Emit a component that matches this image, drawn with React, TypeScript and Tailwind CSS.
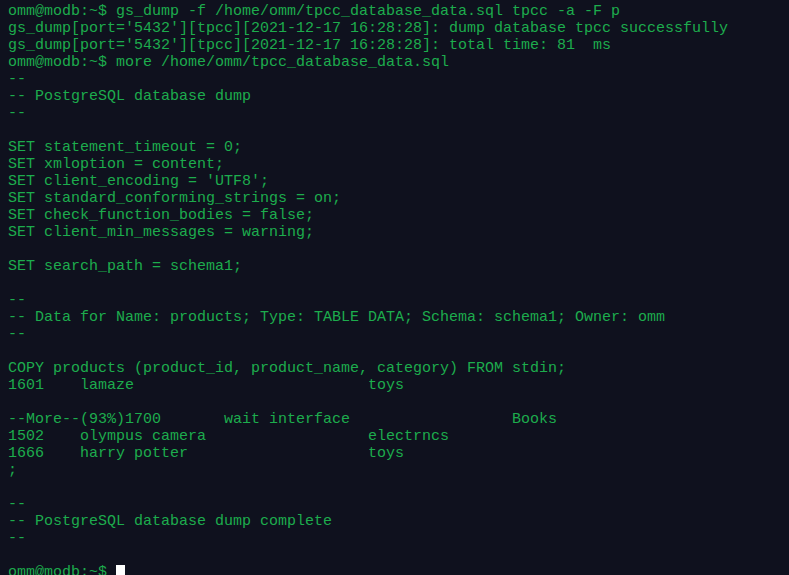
const lines = [
  "omm@modb:~$ gs_dump -f /home/omm/tpcc_database_data.sql tpcc -a -F p",
  "gs_dump[port='5432'][tpcc][2021-12-17 16:28:28]: dump database tpcc successfully",
  "gs_dump[port='5432'][tpcc][2021-12-17 16:28:28]: total time: 81  ms",
  "omm@modb:~$ more /home/omm/tpcc_database_data.sql",
  "--",
  "-- PostgreSQL database dump",
  "--",
  "",
  "SET statement_timeout = 0;",
  "SET xmloption = content;",
  "SET client_encoding = 'UTF8';",
  "SET standard_conforming_strings = on;",
  "SET check_function_bodies = false;",
  "SET client_min_messages = warning;",
  "",
  "SET search_path = schema1;",
  "",
  "--",
  "-- Data for Name: products; Type: TABLE DATA; Schema: schema1; Owner: omm",
  "--",
  "",
  "COPY products (product_id, product_name, category) FROM stdin;",
  "1601    lamaze                          toys",
  "",
  "--More--(93%)1700       wait interface                  Books",
  "1502    olympus camera                  electrncs",
  "1666    harry potter                    toys",
  ";",
  "",
  "--",
  "-- PostgreSQL database dump complete",
  "--",
  "",
]

export default function App() {
  return (
    <div className="w-[789px] h-[575px] overflow-hidden bg-[#0f111e]">
      <pre
        className="pl-2 pt-[3px] text-[15px] leading-[17px] text-[#1dac4d]"
        style={{ fontFamily: '"Liberation Mono", "DejaVu Sans Mono", monospace' }}
      >
        {lines.map((l, i) => (
          <div key={i} className="h-[17px] whitespace-pre">{l}</div>
        ))}
        <div className="h-[17px] whitespace-pre flex items-start">
          <span>omm@modb:~$ </span>
          <span className="inline-block w-[9px] h-[13px] mt-[1px] bg-white" />
        </div>
      </pre>
    </div>
  )
}
